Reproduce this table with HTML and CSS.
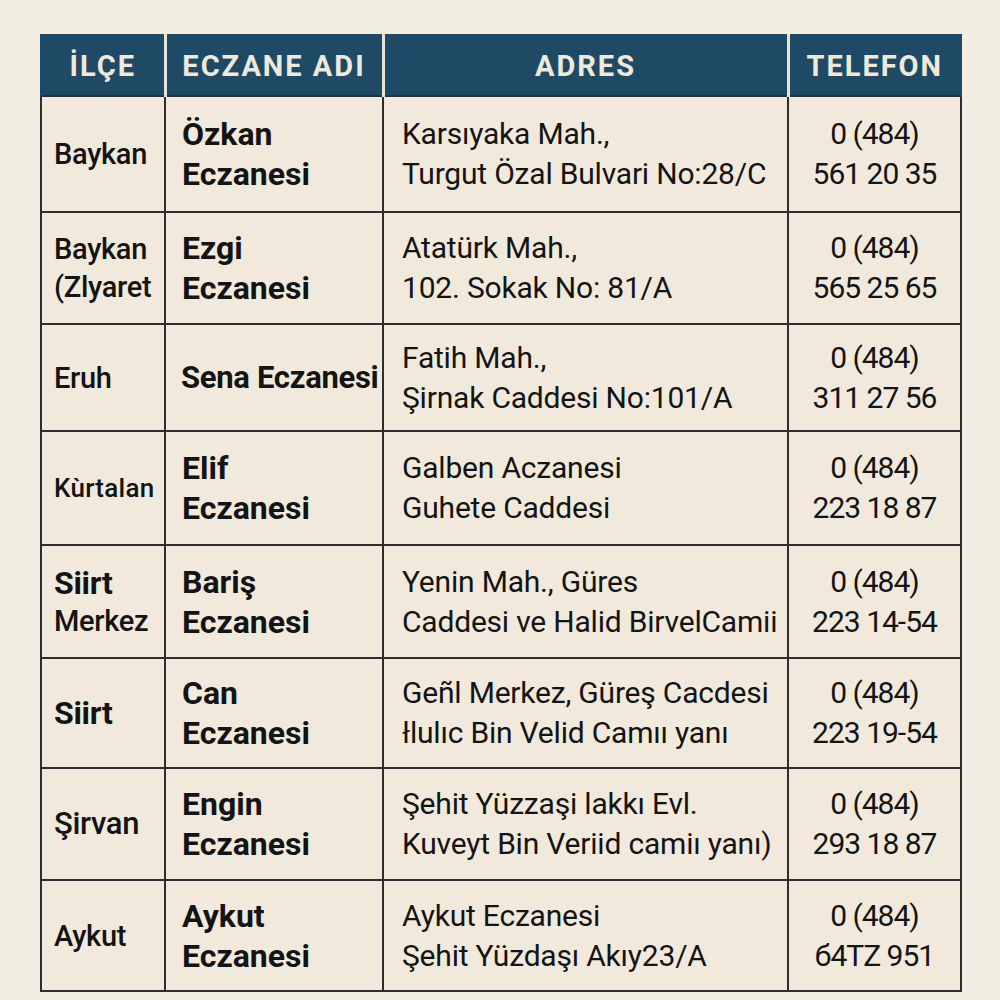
FILE: index.html
```html
<!DOCTYPE html>
<html lang="tr">
<head>
<meta charset="utf-8">
<title>Nöbetçi Eczaneler</title>
<link rel="stylesheet" href="styles.css">
</head>
<body>
<div class="page">
<table class="pharmacies">
  <colgroup>
    <col class="c-ilce">
    <col class="c-name">
    <col class="c-addr">
    <col class="c-tel">
  </colgroup>
  <thead>
    <tr>
      <th>İLÇE</th>
      <th>ECZANE ADI</th>
      <th>ADRES</th>
      <th>TELEFON</th>
    </tr>
  </thead>
  <tbody>
    <tr>
      <td class="ilce">Baykan</td>
      <td class="name"><span class="ln">Özkan</span><span class="ln">Eczanesi</span></td>
      <td class="addr"><span class="ln">Karsıyaka Mah.,</span><span class="ln">Turgut Özal Bulvari No:28/C</span></td>
      <td class="tel"><span class="ln">0 (484)</span><span class="ln">561 20 35</span></td>
    </tr>
    <tr>
      <td class="ilce"><span class="ln">Baykan</span><span class="ln">(Zlyaret</span></td>
      <td class="name"><span class="ln">Ezgi</span><span class="ln">Eczanesi</span></td>
      <td class="addr"><span class="ln">Atatürk Mah.,</span><span class="ln">102. Sokak No: 81/A</span></td>
      <td class="tel"><span class="ln">0 (484)</span><span class="ln">565 25 65</span></td>
    </tr>
    <tr>
      <td class="ilce">Eruh</td>
      <td class="name single">Sena Eczanesi</td>
      <td class="addr"><span class="ln">Fatih Mah.,</span><span class="ln">Şirnak Caddesi No:101/A</span></td>
      <td class="tel"><span class="ln">0 (484)</span><span class="ln">311 27 56</span></td>
    </tr>
    <tr>
      <td class="ilce small">Kùrtalan</td>
      <td class="name"><span class="ln">Elif</span><span class="ln">Eczanesi</span></td>
      <td class="addr"><span class="ln">Galben Aczanesi</span><span class="ln">Guhete Caddesi</span></td>
      <td class="tel"><span class="ln">0 (484)</span><span class="ln">223 18 87</span></td>
    </tr>
    <tr>
      <td class="ilce"><span class="ln strong">Siirt</span><span class="ln">Merkez</span></td>
      <td class="name"><span class="ln">Bariş</span><span class="ln">Eczanesi</span></td>
      <td class="addr"><span class="ln">Yenin Mah., Güres</span><span class="ln">Caddesi ve Halid BirvelCamii</span></td>
      <td class="tel"><span class="ln">0 (484)</span><span class="ln">223 14-54</span></td>
    </tr>
    <tr>
      <td class="ilce"><span class="strong">Siirt</span></td>
      <td class="name"><span class="ln">Can</span><span class="ln">Eczanesi</span></td>
      <td class="addr"><span class="ln">Geñl Merkez, Güreş Cacdesi</span><span class="ln">łlulıc Bin Velid Camıı yanı</span></td>
      <td class="tel"><span class="ln">0 (484)</span><span class="ln">223 19-54</span></td>
    </tr>
    <tr>
      <td class="ilce big">Şirvan</td>
      <td class="name"><span class="ln">Engin</span><span class="ln">Eczanesi</span></td>
      <td class="addr"><span class="ln">Şehit Yüzzaşi lakkı Evl.</span><span class="ln">Kuveyt Bin Veriid camiı yanı)</span></td>
      <td class="tel"><span class="ln">0 (484)</span><span class="ln">293 18 87</span></td>
    </tr>
    <tr>
      <td class="ilce">Aykut</td>
      <td class="name"><span class="ln">Aykut</span><span class="ln">Eczanesi</span></td>
      <td class="addr"><span class="ln">Aykut Eczanesi</span><span class="ln">Şehit Yüzdaşı Akıy23/A</span></td>
      <td class="tel"><span class="ln">0 (484)</span><span class="ln">б4TZ 951</span></td>
    </tr>
  </tbody>
</table>
</div>
</body>
</html>
```

FILE: styles.css
```css
html, body {
  margin: 0;
  padding: 0;
  background: #f3eee2;
}

body {
  font-family: Roboto, "Noto Sans", "DejaVu Sans", sans-serif;
  color: #141414;
}

.page {
  padding: 34px 0 0 40px;
}

.pharmacies {
  border-collapse: collapse;
  table-layout: fixed;
  width: 920px;
  background: #f1eadc;
}

.c-ilce { width: 124px; }
.c-name { width: 218px; }
.c-addr { width: 405px; }
.c-tel  { width: 173px; }

.pharmacies th {
  height: 58px;
  padding: 3px 0 0;
  line-height: 1;
  background: #1f4a66;
  color: #efe9da;
  font-size: 29px;
  font-weight: 700;
  letter-spacing: 2px;
  text-align: center;
  vertical-align: middle;
  border-left: 3px solid #e9e3d5;
  border-right: 3px solid #e9e3d5;
  border-top: 0;
  border-bottom: 0;
}

.pharmacies th:first-child { border-left: 2px solid #1f4a66; }
.pharmacies th:last-child { border-right: 2px solid #1f4a66; }

.pharmacies td {
  border: 2px solid #2e2e2e;
  padding: 0;
  vertical-align: middle;
  line-height: 40px;
}

.pharmacies tbody tr:nth-child(1) { height: 116px; }
.pharmacies tbody tr:nth-child(2) { height: 112px; }
.pharmacies tbody tr:nth-child(3) { height: 107px; }
.pharmacies tbody tr:nth-child(4) { height: 114px; }
.pharmacies tbody tr:nth-child(5) { height: 113px; }
.pharmacies tbody tr:nth-child(6) { height: 110px; }
.pharmacies tbody tr:nth-child(7) { height: 112px; }
.pharmacies tbody tr:nth-child(8) { height: 111px; }

.ln { display: block; }

.ilce {
  padding-left: 12px !important;
  font-size: 29px;
  font-weight: 500;
  line-height: 38px !important;
  letter-spacing: -0.3px;
}

.ilce.small {
  font-size: 26px;
  letter-spacing: 0.3px;
}

.ilce.big {
  font-size: 31px;
}

.ilce .strong {
  font-weight: 700;
  font-size: 32px;
}

.name {
  padding-left: 16px !important;
  font-size: 32px;
  font-weight: 700;
}

.name.single {
  white-space: nowrap;
  font-size: 31px;
  letter-spacing: -0.3px;
  padding-left: 15px !important;
}

.addr {
  padding-left: 18px !important;
  font-size: 30px;
  font-weight: 400;
  white-space: nowrap;
  letter-spacing: -0.2px;
}

.tel {
  text-align: center;
  font-size: 30px;
  font-weight: 400;
  letter-spacing: -1px;
}
```
